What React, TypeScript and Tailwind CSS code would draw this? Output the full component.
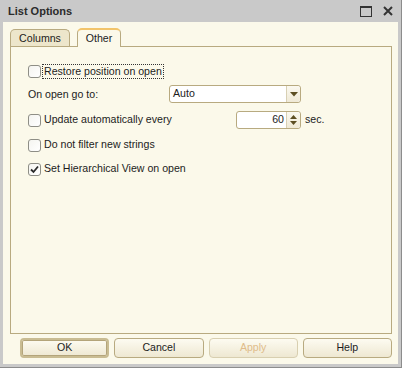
import React from "react";

const font = { fontFamily: '"Liberation Sans", Arial, sans-serif' };

function Checkbox({ checked = false }: { checked?: boolean }) {
  return (
    <div className="w-[13px] h-[13px] rounded-[3px] border border-[#8e8e86] bg-gradient-to-br from-[#f4f4f0] to-[#ffffff] flex items-center justify-center shrink-0">
      {checked && (
        <svg width="9" height="9" viewBox="0 0 9 9">
          <path d="M1 4.5 L3.5 7 L8 1.5" fill="none" stroke="#2a2a2a" strokeWidth="1.8" />
        </svg>
      )}
    </div>
  );
}

function DownArrow() {
  return (
    <svg width="8" height="5" viewBox="0 0 8 5">
      <path d="M0 0 H8 L4 4.5 Z" fill="#5c4e22" />
    </svg>
  );
}

function Btn({ label, def = false, disabled = false }: { label: string; def?: boolean; disabled?: boolean }) {
  return (
    <div
      className={`h-[20px] rounded-[4px] flex items-center justify-center text-[10.6px] bg-gradient-to-b from-[#fdfbf1] to-[#eee8d2] ${
        def ? "border-2 border-[#c9bc92] shadow-[inset_0_0_0_1px_#b3a47a]" : "border border-[#b8aa80]"
      } ${disabled ? "text-[#e0bc8a] border-[#d8cfb0]" : "text-[#1c1c1c]"}`}
    >
      {label}
    </div>
  );
}

export default function App() {
  return (
    <div style={font} className="w-[402px] h-[368px] bg-[#c9c9c9] flex flex-col border-r border-b border-[#8c8c8c]">
      {/* Title bar */}
      <div className="h-[22px] flex items-center pl-[8px] pr-[8px] shrink-0">
        <span className="text-[11px] font-bold text-[#2b2b2b] mt-[1px]">List Options</span>
        <div className="ml-auto flex items-center gap-[11px]">
          <svg width="12" height="11" viewBox="0 0 12 11">
            <rect x="0.5" y="1" width="11" height="9.5" fill="none" stroke="#333" strokeWidth="1" />
            <rect x="0" y="0" width="12" height="2" fill="#333" />
          </svg>
          <svg width="10" height="10" viewBox="0 0 10 10">
            <path d="M1 1 L9 9 M9 1 L1 9" stroke="#333" strokeWidth="2" />
          </svg>
        </div>
      </div>
      {/* Body */}
      <div className="flex-1 ml-[3px] mr-[3px] mb-[4px] bg-[#fbf9ea] flex flex-col pl-[7px] pr-[6px] pt-[6px] pb-[6px]">
        {/* Tabs */}
        <div className="flex items-end h-[18px] relative z-10">
          <div className="w-[60px] h-[17px] mr-[7px] rounded-t-[5px] border border-b-0 border-[#b8aa80] bg-[#ede6cb] flex items-center justify-center text-[10.6px] text-[#1c1c1c] pt-[1px]">
            Columns
          </div>
          <div className="w-[44px] h-[19px] rounded-t-[5px] border border-b-0 border-[#b8aa80] border-t-2 border-t-[#f2c46a] bg-[#fbf9ea] flex items-center justify-center text-[10.6px] text-[#1c1c1c] mb-[-1px]">
            Other
          </div>
        </div>
        {/* Panel */}
        <div className="h-[288px] border border-[#b8aa80] flex flex-col pl-[17px] text-[10.6px] text-[#1c1c1c]">
          <div className="mt-[15px] h-[18px] flex items-center">
            <Checkbox />
            <span className="ml-[1px] px-[1px] border border-dotted border-[#333] leading-[13px]">Restore position on open</span>
          </div>
          <div className="mt-[5px] h-[18px] flex items-center">
            <span className="w-[141px] mt-[2px]">On open go to:</span>
            <div className="w-[132px] h-[18px] rounded-[3px] border border-[#b8aa80] bg-white flex items-center">
              <span className="flex-1 pl-[3px]">Auto</span>
              <div className="w-[14px] h-full border-l border-[#d8d0b4] bg-gradient-to-b from-[#fbf9f0] to-[#efe9d6] rounded-r-[3px] flex items-center justify-center">
                <DownArrow />
              </div>
            </div>
          </div>
          <div className="mt-[8px] h-[18px] flex items-center">
            <Checkbox />
            <span className="ml-[3px] w-[192px]">Update automatically every</span>
            <div className="w-[65px] h-[18px] rounded-[3px] border border-[#b8aa80] bg-white flex items-center">
              <span className="flex-1 text-right pr-[2px]">60</span>
              <div className="w-[14px] h-full border-l border-[#d8d0b4] bg-gradient-to-b from-[#fbf9f0] to-[#efe9d6] rounded-r-[3px] flex flex-col items-center justify-center gap-[2px]">
                <svg width="7" height="4" viewBox="0 0 7 4">
                  <path d="M0 4 H7 L3.5 0 Z" fill="#5c4e22" />
                </svg>
                <svg width="7" height="4" viewBox="0 0 7 4">
                  <path d="M0 0 H7 L3.5 4 Z" fill="#5c4e22" />
                </svg>
              </div>
            </div>
            <span className="ml-[4px]">sec.</span>
          </div>
          <div className="mt-[7px] h-[18px] flex items-center">
            <Checkbox />
            <span className="ml-[3px]">Do not filter new strings</span>
          </div>
          <div className="mt-[6px] h-[18px] flex items-center">
            <Checkbox checked />
            <span className="ml-[3px]">Set Hierarchical View on open</span>
          </div>
        </div>
        {/* Buttons */}
        <div className="mt-[4px] ml-[10px] grid grid-cols-4 gap-[5px]">
          <Btn label="OK" def />
          <Btn label="Cancel" />
          <Btn label="Apply" disabled />
          <Btn label="Help" />
        </div>
      </div>
    </div>
  );
}
